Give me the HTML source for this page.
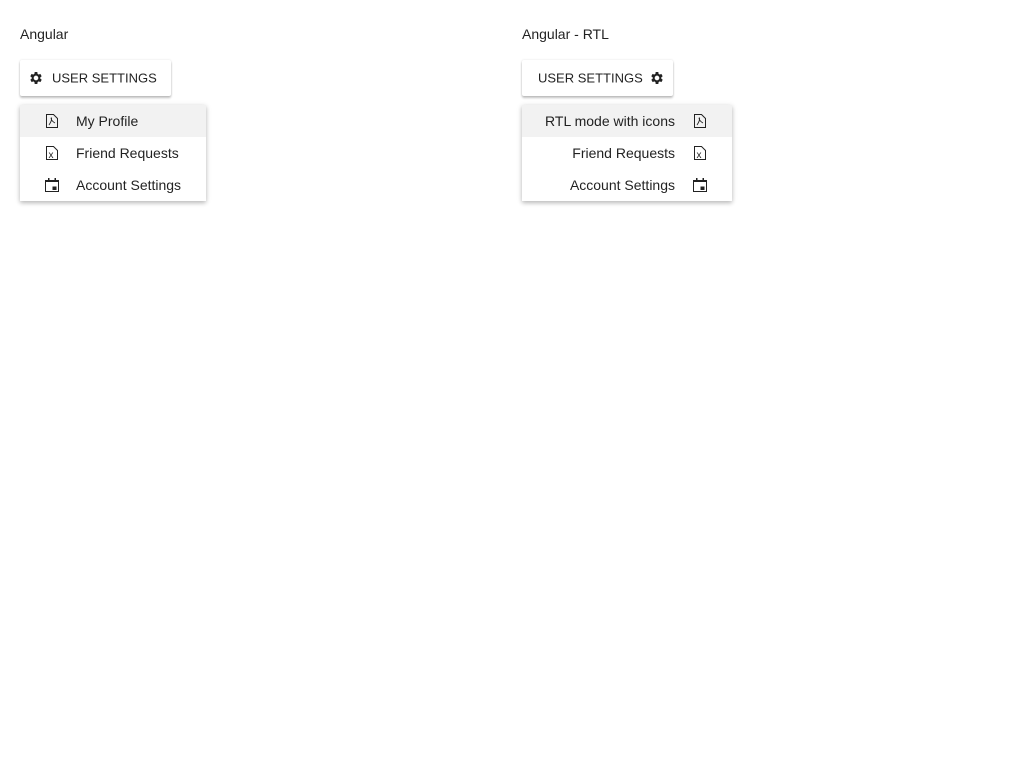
<!DOCTYPE html>
<html><head><style>
body{margin:0;background:#fff;font-family:"Liberation Sans",sans-serif;font-size:14px;color:rgba(0,0,0,.87);}
.t{position:absolute;top:26px;font-size:14px;}
.btn{position:absolute;top:60px;height:36px;background:#fff;box-shadow:0 2px 2px rgba(0,0,0,.24),0 0 2px rgba(0,0,0,.12);border-radius:2px;font-size:13px;white-space:nowrap;}
.btn span,.btn svg{position:absolute;top:50%;transform:translateY(-50%);}
.menu{position:absolute;top:105px;background:#fff;box-shadow:0 2px 4px rgba(0,0,0,.2),0 1px 6px rgba(0,0,0,.12);}
.it{height:32px;display:flex;align-items:center;position:relative;white-space:nowrap;}
.it.h{background:#f2f2f2;}
svg{display:block}
</style></head><body>
<div class="t" style="left:20px">Angular</div>
<div class="t" style="left:522px">Angular - RTL</div>

<div class="btn" style="left:20px;width:151px">
<svg style="left:8px" width="16" height="16" viewBox="0 0 24 24"><path fill="#222" d="M19.4 13a7.5 7.5 0 0 0 0-2l2.1-1.6-2-3.5-2.5 1a7.5 7.5 0 0 0-1.7-1L15 3h-4l-.4 2.9a7.5 7.5 0 0 0-1.7 1l-2.5-1-2 3.5L6.6 11a7.5 7.5 0 0 0 0 2l-2.1 1.6 2 3.5 2.5-1a7.5 7.5 0 0 0 1.7 1L11 21h4l.4-2.9a7.5 7.5 0 0 0 1.7-1l2.5 1 2-3.5zM13 15.5a3.5 3.5 0 1 1 0-7 3.5 3.5 0 0 1 0 7z" transform="translate(-1 0)"/></svg>
<span style="left:32px">USER SETTINGS</span></div>

<div class="btn" style="left:522px;width:151px">
<span style="left:16px">USER SETTINGS</span>
<svg style="left:127px" width="16" height="16" viewBox="0 0 24 24"><path fill="#222" d="M19.4 13a7.5 7.5 0 0 0 0-2l2.1-1.6-2-3.5-2.5 1a7.5 7.5 0 0 0-1.7-1L15 3h-4l-.4 2.9a7.5 7.5 0 0 0-1.7 1l-2.5-1-2 3.5L6.6 11a7.5 7.5 0 0 0 0 2l-2.1 1.6 2 3.5 2.5-1a7.5 7.5 0 0 0 1.7 1L11 21h4l.4-2.9a7.5 7.5 0 0 0 1.7-1l2.5 1 2-3.5zM13 15.5a3.5 3.5 0 1 1 0-7 3.5 3.5 0 0 1 0 7z" transform="translate(-1 0)"/></svg></div>

<div class="menu" style="left:20px;width:186px">
<div class="it h"><svg style="position:absolute;left:26px" width="12" height="14" viewBox="0 0 12 14"><path d="M.5.5h7l4 4v9H.5z" fill="none" stroke="#222"/><path d="M3 11c2-3 3-6 2.5-7S4 6 9 9" fill="none" stroke="#222" stroke-width=".8"/></svg><span style="position:absolute;left:56px">My Profile</span></div>
<div class="it"><svg style="position:absolute;left:26px" width="12" height="14" viewBox="0 0 12 14"><path d="M.5.5h7l4 4v9H.5z" fill="none" stroke="#222"/><text x="2.5" y="12" font-size="10" font-family="Liberation Sans" fill="#222">x</text></svg><span style="position:absolute;left:56px">Friend Requests</span></div>
<div class="it"><svg style="position:absolute;left:25px" width="14" height="14" viewBox="0 0 14 14"><rect x=".5" y="2.5" width="13" height="11" fill="none" stroke="#222"/><rect x=".5" y="2.5" width="13" height="1.5" fill="#222"/><rect x="3" y="0" width="1.5" height="3" fill="#222"/><rect x="9.5" y="0" width="1.5" height="3" fill="#222"/><rect x="7.5" y="8.5" width="4" height="3.5" fill="#222"/></svg><span style="position:absolute;left:56px">Account Settings</span></div>
</div>

<div class="menu" style="left:522px;width:210px">
<div class="it h"><span style="position:absolute;right:57px">RTL mode with icons</span><svg style="position:absolute;left:172px" width="12" height="14" viewBox="0 0 12 14"><path d="M.5.5h7l4 4v9H.5z" fill="none" stroke="#222"/><path d="M3 11c2-3 3-6 2.5-7S4 6 9 9" fill="none" stroke="#222" stroke-width=".8"/></svg></div>
<div class="it"><span style="position:absolute;right:57px">Friend Requests</span><svg style="position:absolute;left:172px" width="12" height="14" viewBox="0 0 12 14"><path d="M.5.5h7l4 4v9H.5z" fill="none" stroke="#222"/><text x="2.5" y="12" font-size="10" font-family="Liberation Sans" fill="#222">x</text></svg></div>
<div class="it"><span style="position:absolute;right:57px">Account Settings</span><svg style="position:absolute;left:171px" width="14" height="14" viewBox="0 0 14 14"><rect x=".5" y="2.5" width="13" height="11" fill="none" stroke="#222"/><rect x=".5" y="2.5" width="13" height="1.5" fill="#222"/><rect x="3" y="0" width="1.5" height="3" fill="#222"/><rect x="9.5" y="0" width="1.5" height="3" fill="#222"/><rect x="7.5" y="8.5" width="4" height="3.5" fill="#222"/></svg></div>
</div>
</body></html>
